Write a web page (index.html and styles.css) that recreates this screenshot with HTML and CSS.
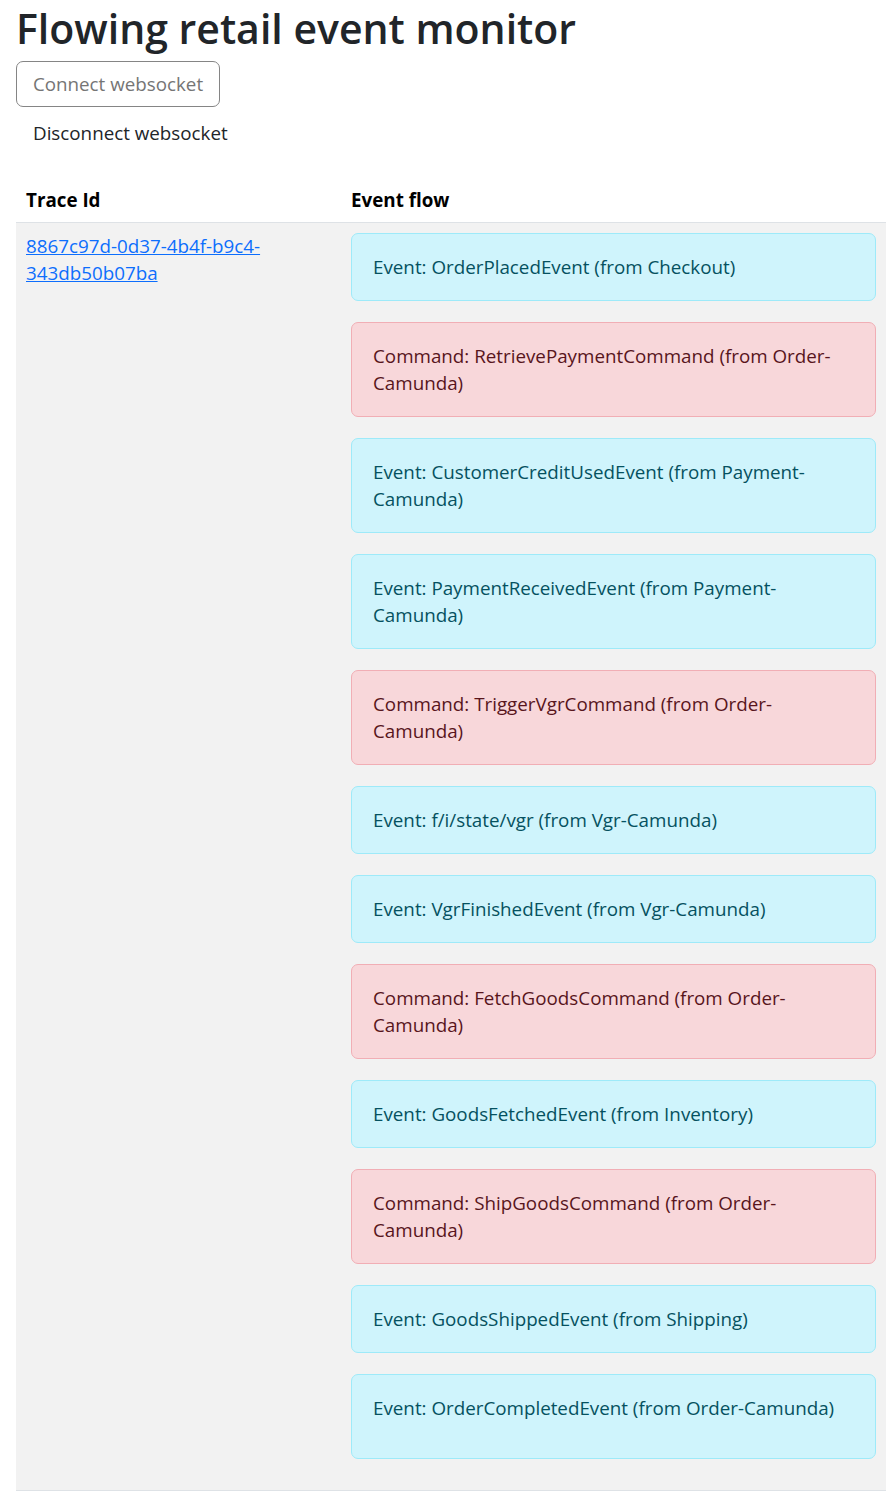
FILE: index.html
```html
<!DOCTYPE html>
<html lang="en">
<head>
<meta charset="utf-8">
<title>Flowing retail event monitor</title>
<link rel="stylesheet" href="styles.css">
</head>
<body>
<h1 class="title">Flowing retail event monitor</h1>
<div class="controls">
  <button class="btn btn-connect" disabled>Connect websocket</button>
  <button class="btn btn-disconnect">Disconnect websocket</button>
</div>
<table class="trace-table">
  <thead>
    <tr>
      <th class="col-trace">Trace Id</th>
      <th class="col-flow">Event flow</th>
    </tr>
  </thead>
  <tbody>
    <tr class="row-striped">
      <td class="col-trace"><a href="#" class="trace-link">8867c97d-0d37-4b4f-b9c4-343db50b07ba</a></td>
      <td class="col-flow">
        <div class="alert alert-info">Event: OrderPlacedEvent (from Checkout)</div>
        <div class="alert alert-danger">Command: RetrievePaymentCommand (from Order-Camunda)</div>
        <div class="alert alert-info">Event: CustomerCreditUsedEvent (from Payment-Camunda)</div>
        <div class="alert alert-info">Event: PaymentReceivedEvent (from Payment-Camunda)</div>
        <div class="alert alert-danger">Command: TriggerVgrCommand (from Order-Camunda)</div>
        <div class="alert alert-info">Event: f/i/state/vgr (from Vgr-Camunda)</div>
        <div class="alert alert-info">Event: VgrFinishedEvent (from Vgr-Camunda)</div>
        <div class="alert alert-danger">Command: FetchGoodsCommand (from Order-Camunda)</div>
        <div class="alert alert-info">Event: GoodsFetchedEvent (from Inventory)</div>
        <div class="alert alert-danger">Command: ShipGoodsCommand (from Order-Camunda)</div>
        <div class="alert alert-info">Event: GoodsShippedEvent (from Shipping)</div>
        <div class="alert alert-info alert-tall">Event: OrderCompletedEvent (from Order-Camunda)</div>
      </td>
    </tr>
  </tbody>
</table>
</body>
</html>
```
FILE: styles.css
```css
* { box-sizing: border-box; }
body {
  margin: 0;
  padding: 0 5px 0 16px;
  font-family: "Open Sans", "Noto Sans", sans-serif;
  font-size: 18.8px;
  line-height: 27px;
  color: #212529;
  background: #fff;
}
.title {
  margin: 0;
  padding: 0;
  font-size: 41px;
  line-height: 56px;
  font-weight: 600;
  color: #212529;
}
.controls {
  display: flex;
  flex-direction: column;
  align-items: flex-start;
  margin-top: 5px;
  gap: 3px;
}
.btn {
  font-family: inherit;
  font-size: 18.8px;
  line-height: 27px;
  height: 46px;
  padding: 0 15px;
  border: 1px solid transparent;
  border-radius: 7px;
  background: transparent;
}
.btn-connect {
  width: 204px;
  color: #757575;
  border-color: #858585;
}
.btn-disconnect {
  color: #212529;
  padding-left: 16px;
}
.trace-table {
  width: 870px;
  margin-top: 21px;
  border-collapse: collapse;
  table-layout: fixed;
}
.trace-table th {
  text-align: left;
  font-weight: 700;
  padding: 10px 10px 8px;
  border-bottom: 1px solid #dee2e6;
  color: #000;
}
.trace-table th.col-trace { width: 325px; }
.trace-table td {
  vertical-align: top;
  padding: 10px 10px;
  border-bottom: 1px solid #dee2e6;
}
.row-striped td { background: #f2f2f2; }
.trace-link {
  color: #0d6efd;
  text-decoration: underline;
  word-break: break-word;
}
.alert {
  border: 1px solid transparent;
  border-radius: 7px;
  padding: 19.5px 21px;
  margin-bottom: 21px;
}
.alert-info {
  background: #cff4fc;
  border-color: #9eeaf9;
  color: #055160;
}
.alert-danger {
  background: #f8d7da;
  border-color: #f1aeb5;
  color: #58151c;
}
.alert-tall { padding-bottom: 36.5px; }
```
